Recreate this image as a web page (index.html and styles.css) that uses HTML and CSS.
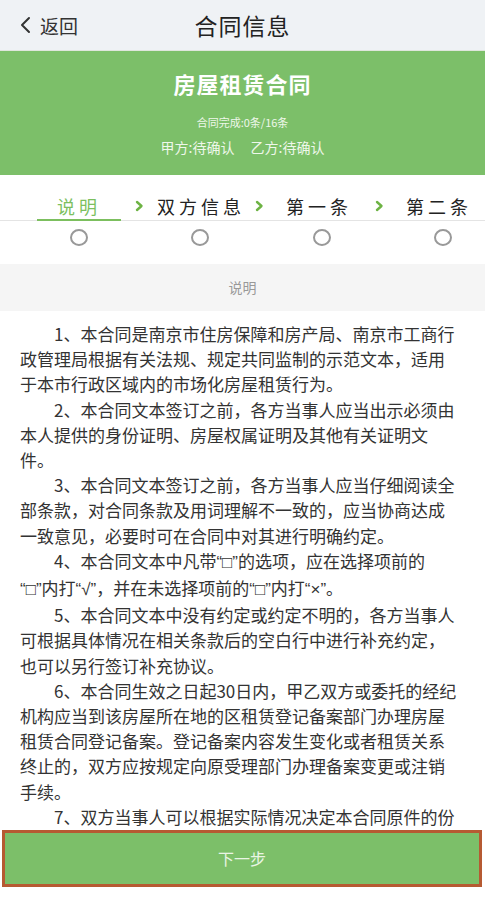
FILE: index.html
```html
<!DOCTYPE html>
<html lang="zh-CN">
<head>
    <meta charset="UTF-8">
    <meta name="viewport" content="width=device-width, initial-scale=1.0">
    <title>合同信息</title>
    <link rel="stylesheet" href="styles.css">
</head>
<body>
    <div class="header">
        <div class="back">
            <svg class="back-icon" width="12" height="18" viewBox="0 0 12 18">
                <path d="M10 2 L3 9 L10 16" fill="none" stroke="#333" stroke-width="2" stroke-linecap="round" stroke-linejoin="round"/>
            </svg>
            <span>返回</span>
        </div>
        <div class="title">合同信息</div>
    </div>

    <div class="banner">
        <div class="banner-title">房屋租赁合同</div>
        <div class="banner-progress">合同完成:0条/16条</div>
        <div class="banner-parties"><span>甲方:待确认</span><span class="party-b">乙方:待确认</span></div>
    </div>

    <!-- step tabs -->
    <div class="steps">
        <div class="step active">说明</div>
        <div class="arrow"><svg width="9" height="12" viewBox="0 0 9 12"><path d="M2 2 L6.5 6 L2 10" fill="none" stroke="#6db344" stroke-width="2.4" stroke-linecap="round" stroke-linejoin="round"/></svg></div>
        <div class="step">双方信息</div>
        <div class="arrow"><svg width="9" height="12" viewBox="0 0 9 12"><path d="M2 2 L6.5 6 L2 10" fill="none" stroke="#6db344" stroke-width="2.4" stroke-linecap="round" stroke-linejoin="round"/></svg></div>
        <div class="step">第一条</div>
        <div class="arrow"><svg width="9" height="12" viewBox="0 0 9 12"><path d="M2 2 L6.5 6 L2 10" fill="none" stroke="#6db344" stroke-width="2.4" stroke-linecap="round" stroke-linejoin="round"/></svg></div>
        <div class="step">第二条</div>
    </div>
    <div class="marks">
        <div class="mark"><span class="circle"></span></div>
        <div class="mark"><span class="circle"></span></div>
        <div class="mark"><span class="circle"></span></div>
        <div class="mark"><span class="circle"></span></div>
    </div>

    <div class="section-title">说明</div>

    <div class="content">
        <p>1、本合同是南京市住房保障和房产局、南京市工商行<br>政管理局根据有关法规、规定共同监制的示范文本，适用<br>于本市行政区域内的市场化房屋租赁行为。</p>
        <p>2、本合同文本签订之前，各方当事人应当出示必须由<br>本人提供的身份证明、房屋权属证明及其他有关证明文<br>件。</p>
        <p>3、本合同文本签订之前，各方当事人应当仔细阅读全<br>部条款，对合同条款及用词理解不一致的，应当协商达成<br>一致意见，必要时可在合同中对其进行明确约定。</p>
        <p>4、本合同文本中凡带<span class="q">“□”</span>的选项，应在选择项前的<br><span class="q">“□”</span>内打<span class="q">“√”</span>，并在未选择项前的<span class="q">“□”</span>内打<span class="q">“×”</span>。</p>
        <p>5、本合同文本中没有约定或约定不明的，各方当事人<br>可根据具体情况在相关条款后的空白行中进行补充约定，<br>也可以另行签订补充协议。</p>
        <p>6、本合同生效之日起30日内，甲乙双方或委托的经纪<br>机构应当到该房屋所在地的区租赁登记备案部门办理房屋<br>租赁合同登记备案。登记备案内容发生变化或者租赁关系<br>终止的，双方应按规定向原受理部门办理备案变更或注销<br>手续。</p>
        <p>7、双方当事人可以根据实际情况决定本合同原件的份<br>数，并在签订合同时认真核对，以确保各份合同内容一<br>致；在任何情况下，甲乙双方都应当至少持有一份合同原<br>件。</p>
    </div>

    <div class="footer">
        <div class="next-btn">下一步</div>
    </div>
</body>
</html>
```

FILE: styles.css
```css
body {
    margin: 0;
    height: 900px;
    display: flex;
    flex-direction: column;
    background-color: #fff;
    font-family: "Noto Sans CJK SC", "Noto Sans", sans-serif;
    color: #333;
    overflow: hidden;
}

.header {
    position: relative;
    flex: 0 0 50px;
    background-color: #eff2f5;
    border-bottom: 1px solid #dfe6dc;
    display: flex;
    align-items: center;
    justify-content: center;
}

.back {
    position: absolute;
    left: 19px;
    top: 0;
    height: 50px;
    display: flex;
    align-items: center;
    gap: 9px;
    font-size: 19px;
    color: #333;
}

.title {
    font-size: 23px;
    color: #222;
    letter-spacing: 1px;
}

.banner {
    background-color: #7cbf69;
    color: #fff;
    text-align: center;
    padding: 17px 0 19px;
}

.banner-title {
    font-size: 22px;
    font-weight: bold;
    line-height: 30px;
    letter-spacing: 1px;
}

.banner-progress {
    font-size: 11px;
    line-height: 14px;
    margin-top: 17px;
    color: #eef7ea;
}

.banner-parties {
    font-size: 14px;
    line-height: 18px;
    margin-top: 9px;
    color: #eef7ea;
}

.party-b {
    margin-left: 16px;
}

.steps {
    display: flex;
    padding: 19px 0 0 37px;
    border-bottom: 1px solid #e4e4e4;
    white-space: nowrap;
}

.step {
    flex: 0 0 84px;
    min-width: 0;
    text-align: center;
    font-size: 18px;
    line-height: 25px;
    letter-spacing: 4px;
    color: #222;
    border-bottom: 2px solid transparent;
    margin-bottom: -1px;
}

.step.active {
    color: #7cbf5e;
    border-bottom-color: #7cbf5e;
}

.arrow {
    flex: 0 0 36px;
    display: flex;
    align-items: center;
    justify-content: center;
    padding-bottom: 2px;
}

.marks {
    display: flex;
    gap: 37.3px;
    padding-left: 37px;
    margin: 8px 0 18px;
}

.mark {
    flex: 0 0 84px;
    display: flex;
    justify-content: center;
}

.circle {
    width: 14px;
    height: 13px;
    border: 2px solid #999;
    border-radius: 50%;
}

.section-title {
    flex: 0 0 47px;
    line-height: 47px;
    background-color: #f5f5f5;
    text-align: center;
    font-size: 14px;
    color: #999;
}

/* text area is clipped where the button starts */
.content {
    flex: 1 1 auto;
    min-height: 0;
    overflow: hidden;
    padding: 10px 20px 0;
    font-size: 17px;
    line-height: 25.2px;
    color: #333;
    white-space: nowrap;
}

.content p {
    margin: 0;
    text-indent: 2em;
}

.q {
    font-family: "Liberation Sans", sans-serif;
}

.footer {
    flex: 0 0 auto;
    padding: 0 3px 13px 2px;
    background-color: #fff;
}

.next-btn {
    height: 51px;
    line-height: 51px;
    background-color: #7cbf69;
    border: 3px solid #b65a32;
    text-align: center;
    font-size: 16px;
    color: #e9f5e4;
}
```
